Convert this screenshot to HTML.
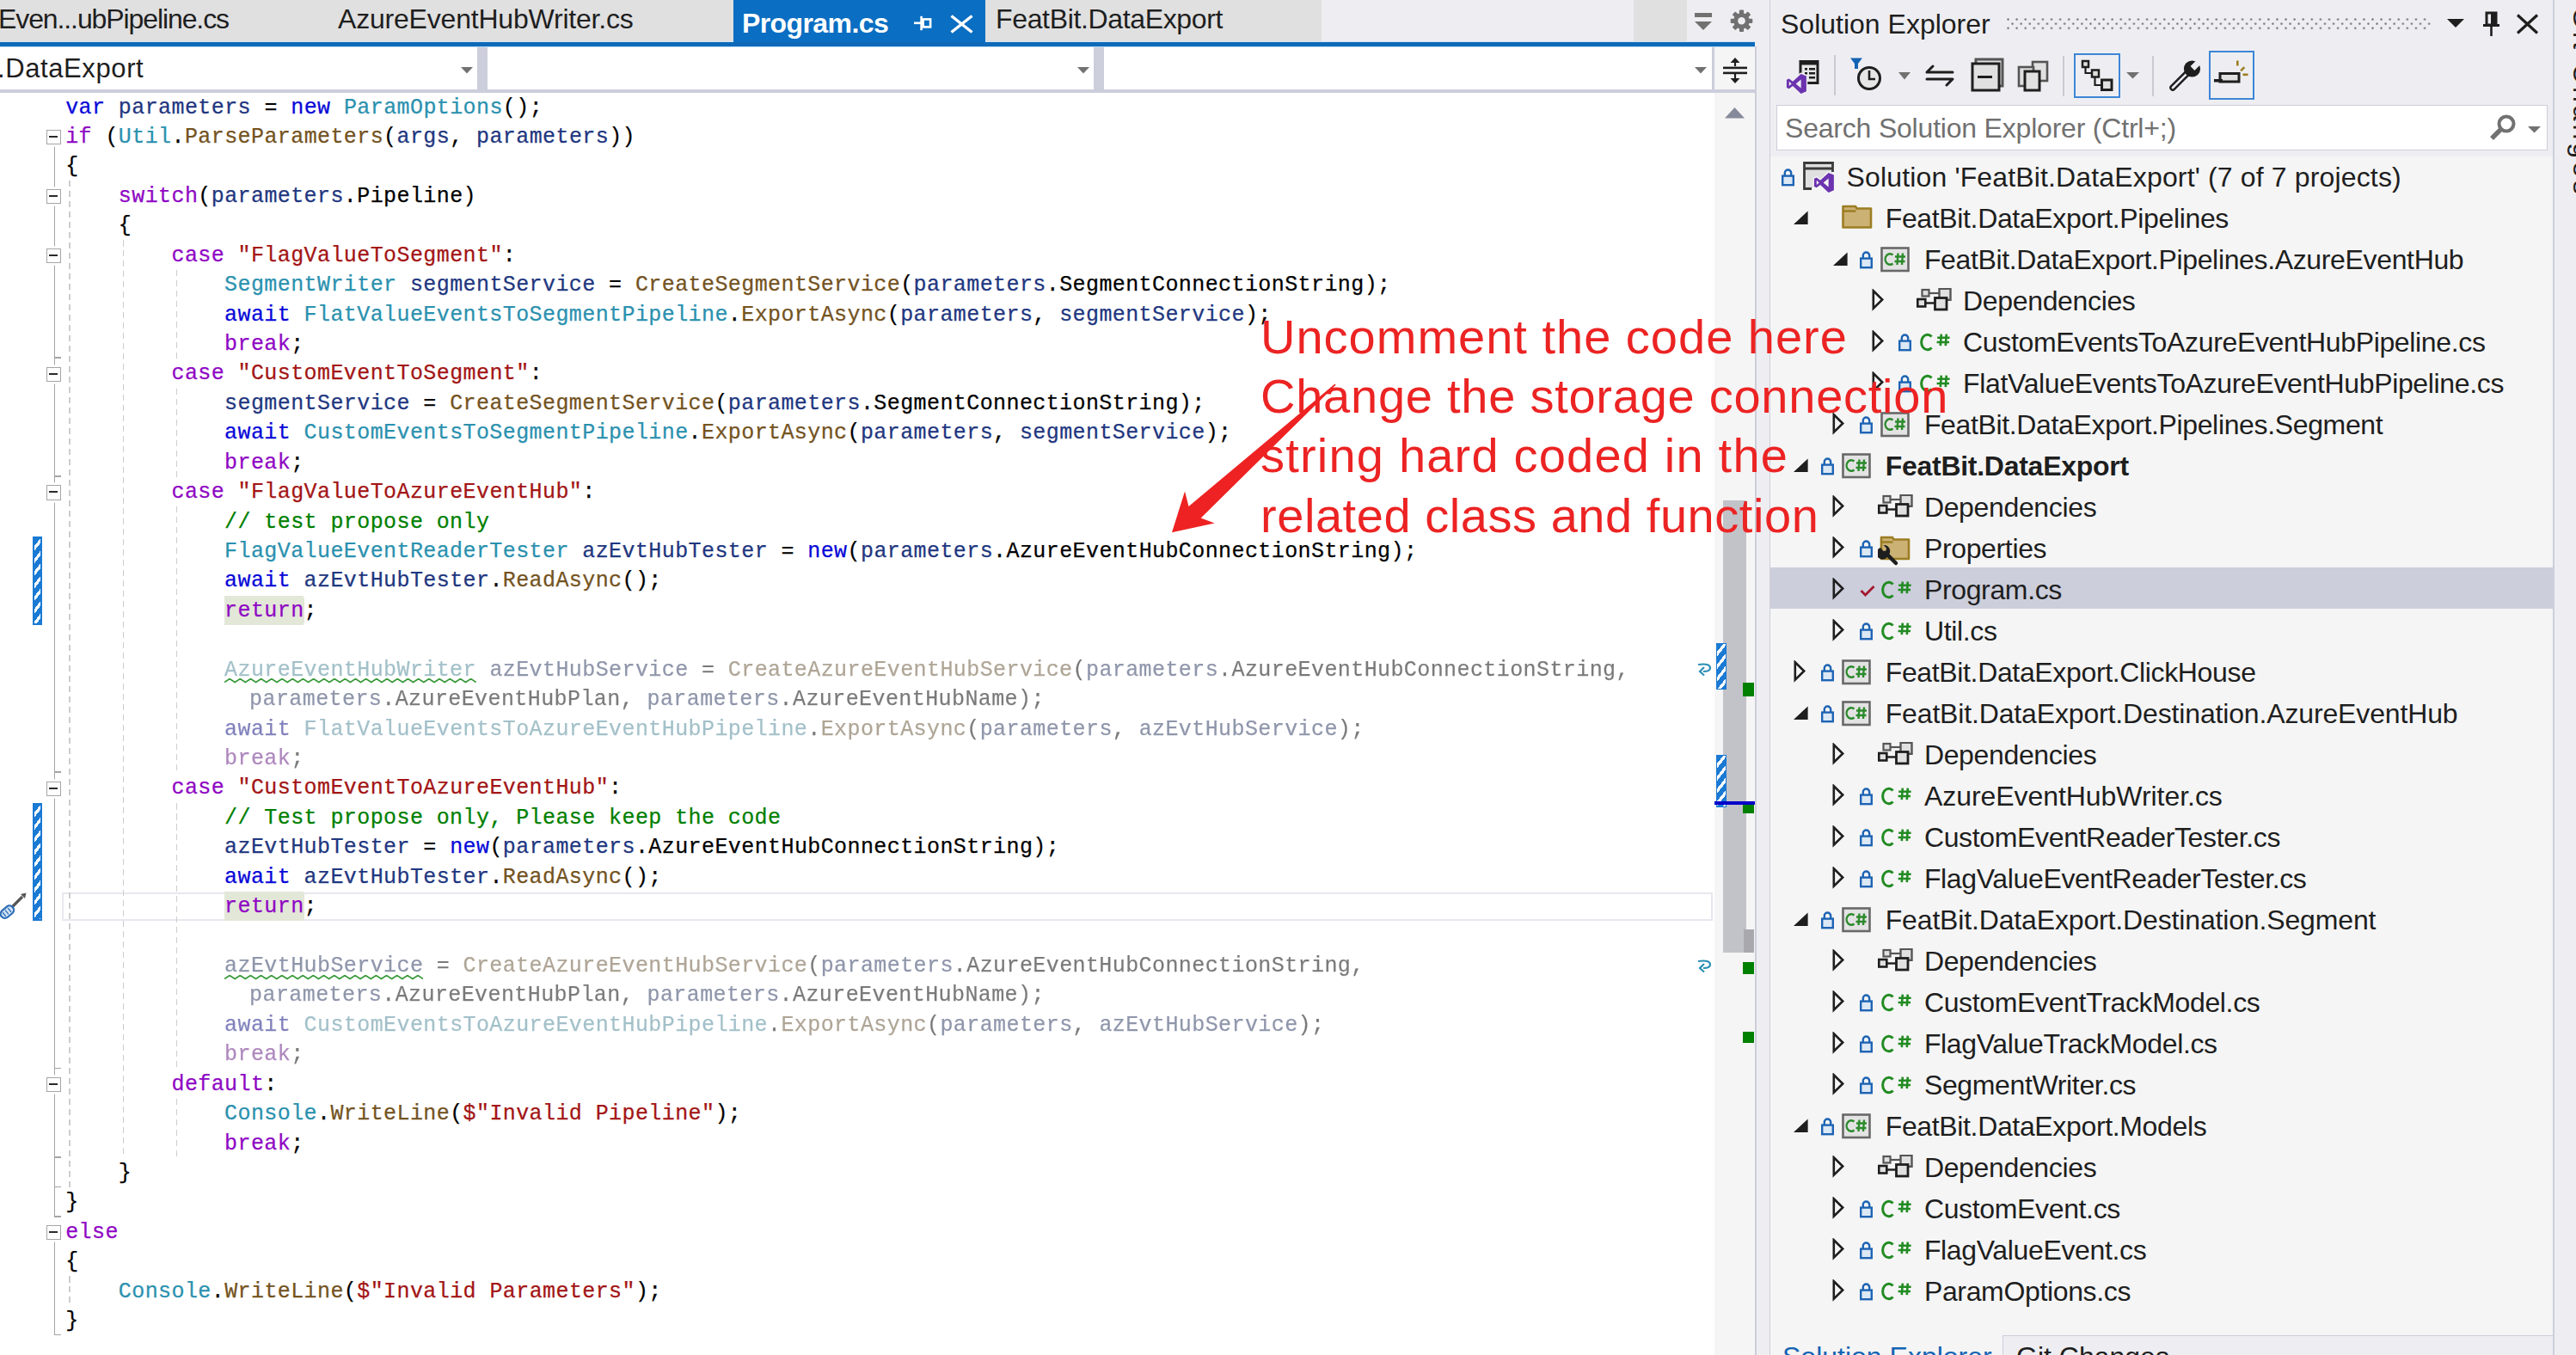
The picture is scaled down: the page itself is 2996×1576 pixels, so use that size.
<!DOCTYPE html>
<html><head><meta charset="utf-8"><style>
*{margin:0;padding:0;box-sizing:border-box}
html,body{width:2996px;height:1576px;overflow:hidden;background:#ffffff}
body{position:relative;font-family:"Liberation Sans",sans-serif;color:#1e1e1e}
.a{position:absolute}
.code{position:absolute;left:0;height:34.43px;line-height:34.43px;font-family:"Liberation Mono",monospace;font-size:25.000px;letter-spacing:0.410px;-webkit-text-stroke:0.25px currentColor;white-space:pre;color:#000}
.k{color:#0808d8}.c{color:#8f08c4}.t{color:#2b91af}.m{color:#74531f}.v{color:#1f377f}.p{color:#000}.s{color:#a31515}.g{color:#008000}
.fd{opacity:.52;filter:saturate(0.55)}
.hl{background:#e3e7d8}
.tr{position:absolute;height:48px;line-height:48px;font-size:32px;white-space:pre;color:#1e1e1e;letter-spacing:-0.35px}
.guide{position:absolute;width:1.6px;background:repeating-linear-gradient(to bottom,#cdcdcd 0,#cdcdcd 7.5px,transparent 7.5px,transparent 12px)}
.obox{position:absolute;width:17.2px;height:17.2px;border:1.6px solid #a5a5a5;background:#fff;box-shadow:0 0 0 2.6px #fff}
.obox:after{content:"";position:absolute;left:2.2px;top:6.1px;width:9.8px;height:1.9px;background:#2a2a2a}
.vl{position:absolute;width:1.6px;background:#a5a5a5}
.tick{position:absolute;height:1.6px;width:8px;background:#a5a5a5}
.cbar{position:absolute;left:38px;width:10.5px;border:2px solid #1a7ad4;background:repeating-linear-gradient(128deg,#1a7ad4 0,#1a7ad4 5.6px,#ffffff 5.6px,#ffffff 9px)}
.sbm{position:absolute;border:1.5px solid #1a7ad4;background:repeating-linear-gradient(128deg,#1a7ad4 0,#1a7ad4 5.6px,#ffffff 5.6px,#ffffff 9px)}
.grn{position:absolute;background:#008000}
.red{position:absolute;font-size:56px;letter-spacing:0.55px;color:#ec2323;white-space:pre;line-height:70px}
</style></head><body>

<div class="a" style="left:0;top:0;width:2041px;height:49px;background:#eeeef2"></div>
<div class="a" style="left:0;top:0;width:853px;height:49px;background:#e0e0e0"></div>
<div class="a" style="left:1146px;top:0;width:391px;height:49px;background:#e0e0e0"></div>
<div class="a" style="left:1900px;top:0;width:62px;height:49px;background:#e0e0e0"></div>
<div class="a" style="left:853px;top:0;width:293px;height:49px;background:#0a6ec2"></div>
<div class="a" style="left:-2px;top:0;height:49px;line-height:44px;font-size:32px;letter-spacing:-1.1px;white-space:pre;color:#1e1e1e">Even...ubPipeline.cs</div>
<div class="a" style="left:393px;top:0;height:49px;line-height:44px;font-size:32px;letter-spacing:-0.2px;white-space:pre;color:#1e1e1e">AzureEventHubWriter.cs</div>
<div class="a" style="left:863px;top:2.5px;height:49px;line-height:48px;font-size:32px;font-weight:bold;letter-spacing:-0.6px;white-space:pre;color:#ffffff">Program.cs</div>
<div class="a" style="left:1158px;top:0;height:49px;line-height:44px;font-size:32px;letter-spacing:-0.35px;white-space:pre;color:#1e1e1e">FeatBit.DataExport</div>
<svg class="a" style="left:1060px;top:14px" width="28" height="28" viewBox="0 0 28 28">
<rect x="13.6" y="8.4" width="8.5" height="9" fill="none" stroke="#fff" stroke-width="2.6"/>
<line x1="3" y1="12.8" x2="12" y2="12.8" stroke="#fff" stroke-width="2.6"/>
<line x1="11.6" y1="4.8" x2="11.6" y2="21.2" stroke="#fff" stroke-width="2.6"/>
</svg>
<svg class="a" style="left:1103px;top:14px" width="30" height="30" viewBox="0 0 30 30">
<path d="M3.5 4.5 L27.5 23.5 M27.5 4.5 L3.5 23.5" stroke="#fff" stroke-width="3.4"/>
</svg>
<svg class="a" style="left:1968px;top:12px" width="26" height="26" viewBox="0 0 26 26">
<rect x="3" y="3" width="20" height="5" fill="#717171"/>
<path d="M3 13 L23 13 L13 23 Z" fill="#717171"/>
</svg>
<svg class="a" style="left:2010px;top:9px" width="31" height="31" viewBox="0 0 31 31">
<g transform="translate(15.5 15.3)" fill="#717171">
<circle r="9.3"/><rect x="-2.6" y="-12.8" width="5.2" height="6" rx="1" transform="rotate(0)"/><rect x="-2.6" y="-12.8" width="5.2" height="6" rx="1" transform="rotate(45)"/><rect x="-2.6" y="-12.8" width="5.2" height="6" rx="1" transform="rotate(90)"/><rect x="-2.6" y="-12.8" width="5.2" height="6" rx="1" transform="rotate(135)"/><rect x="-2.6" y="-12.8" width="5.2" height="6" rx="1" transform="rotate(180)"/><rect x="-2.6" y="-12.8" width="5.2" height="6" rx="1" transform="rotate(225)"/><rect x="-2.6" y="-12.8" width="5.2" height="6" rx="1" transform="rotate(270)"/><rect x="-2.6" y="-12.8" width="5.2" height="6" rx="1" transform="rotate(315)"/>
<circle r="4.3" fill="#eeeef2"/>
</g></svg>
<div class="a" style="left:0;top:48px;width:853px;height:1px;background:#cfe6f7"></div>
<div class="a" style="left:1146px;top:48px;width:895px;height:1px;background:#cfe6f7"></div>
<div class="a" style="left:0;top:49px;width:2041px;height:5px;background:#0e6ab8"></div>
<div class="a" style="left:0;top:54px;width:2041px;height:1.5px;background:#bcdcf5"></div>
<div class="a" style="left:0;top:55px;width:1994px;height:53px;background:#cccedb"></div>
<div class="a" style="left:0;top:55px;width:555px;height:49px;background:#fff"></div>
<div class="a" style="left:567px;top:55px;width:705px;height:49px;background:#fff"></div>
<div class="a" style="left:1284px;top:55px;width:707px;height:49px;background:#fff"></div>
<div class="a" style="left:-3px;top:56px;height:48px;line-height:48px;font-size:31px;letter-spacing:0.6px;white-space:pre;color:#1e1e1e">.DataExport</div>
<svg class="a" style="left:535.7px;top:78px" width="14" height="8" viewBox="0 0 14 8"><path d="M0 0 L14 0 L7 7.5 Z" fill="#717171"/></svg>
<svg class="a" style="left:1252.5px;top:78px" width="14" height="8" viewBox="0 0 14 8"><path d="M0 0 L14 0 L7 7.5 Z" fill="#717171"/></svg>
<svg class="a" style="left:1970.5px;top:78px" width="14" height="8" viewBox="0 0 14 8"><path d="M0 0 L14 0 L7 7.5 Z" fill="#717171"/></svg>
<div class="a" style="left:1994px;top:55px;width:47px;height:53px;background:#f5f5f5"></div>
<div class="a" style="left:1994px;top:104px;width:47px;height:4px;background:#cccedb"></div>
<svg class="a" style="left:2003px;top:66px" width="30" height="32" viewBox="0 0 30 32">
<rect x="1" y="11.6" width="28" height="2.6" fill="#1e1e1e"/>
<rect x="1" y="17.6" width="28" height="2.6" fill="#1e1e1e"/>
<line x1="15" y1="5" x2="15" y2="11" stroke="#1e1e1e" stroke-width="2.2"/>
<path d="M9.5 7 L15 1 L20.5 7 Z" fill="#1e1e1e"/>
<line x1="15" y1="20" x2="15" y2="26" stroke="#1e1e1e" stroke-width="2.2"/>
<path d="M9.5 25 L15 31 L20.5 25 Z" fill="#1e1e1e"/>
</svg>
<div class="a" style="left:71.8px;top:1037.6px;width:1920px;height:33px;border:2.5px solid #e7e7ef"></div>
<div class="a" style="left:260.5px;top:692.51px;width:92.5px;height:34.43px;background:#e3e7d8"></div>
<div class="a" style="left:260.5px;top:1036.81px;width:92.5px;height:34.43px;background:#e3e7d8"></div>
<div class="guide" style="left:80.3px;top:210.49px;height:1170.62px"></div>
<div class="guide" style="left:80.3px;top:1484.40px;height:34.43px"></div>
<div class="guide" style="left:142.8px;top:279.35px;height:1067.33px"></div>
<div class="guide" style="left:204.6px;top:313.78px;height:103.29px"></div>
<div class="guide" style="left:204.6px;top:451.50px;height:103.29px"></div>
<div class="guide" style="left:204.6px;top:589.22px;height:309.87px"></div>
<div class="guide" style="left:204.6px;top:933.52px;height:309.87px"></div>
<div class="guide" style="left:204.6px;top:1277.82px;height:68.86px"></div>
<div class="vl" style="left:62.9px;top:167.44px;height:1248.10px"></div>
<div class="vl" style="left:62.9px;top:1441.35px;height:111.91px"></div>
<div class="tick" style="left:62.9px;top:415.47px"></div>
<div class="tick" style="left:62.9px;top:553.19px"></div>
<div class="tick" style="left:62.9px;top:897.49px"></div>
<div class="tick" style="left:62.9px;top:1241.79px"></div>
<div class="tick" style="left:62.9px;top:1345.08px"></div>
<div class="tick" style="left:62.9px;top:1379.51px"></div>
<div class="tick" style="left:62.9px;top:1413.94px"></div>
<div class="tick" style="left:62.9px;top:1551.66px"></div>
<div class="obox" style="left:54.3px;top:151.25px"></div>
<div class="obox" style="left:54.3px;top:220.11px"></div>
<div class="obox" style="left:54.3px;top:288.96px"></div>
<div class="obox" style="left:54.3px;top:426.68px"></div>
<div class="obox" style="left:54.3px;top:564.40px"></div>
<div class="obox" style="left:54.3px;top:908.71px"></div>
<div class="obox" style="left:54.3px;top:1253.01px"></div>
<div class="obox" style="left:54.3px;top:1425.15px"></div>
<div class="cbar" style="top:623.7px;height:103.3px"></div>
<div class="cbar" style="top:933.5px;height:137.7px"></div>
<div class="code" style="left:76.20px;top:108.50px"><span class="k">var</span><span class="p"> </span><span class="v">parameters</span><span class="p"> = </span><span class="k">new</span><span class="p"> </span><span class="t">ParamOptions</span><span class="p">();</span></div>
<div class="code" style="left:76.20px;top:142.93px"><span class="c">if</span><span class="p"> (</span><span class="t">Util</span><span class="p">.</span><span class="m">ParseParameters</span><span class="p">(</span><span class="v">args</span><span class="p">, </span><span class="v">parameters</span><span class="p">))</span></div>
<div class="code" style="left:76.20px;top:177.36px"><span class="p">{</span></div>
<div class="code" style="left:137.84px;top:211.79px"><span class="c">switch</span><span class="p">(</span><span class="v">parameters</span><span class="p">.Pipeline)</span></div>
<div class="code" style="left:137.84px;top:246.22px"><span class="p">{</span></div>
<div class="code" style="left:199.48px;top:280.65px"><span class="c">case</span><span class="p"> </span><span class="s">"FlagValueToSegment"</span><span class="p">:</span></div>
<div class="code" style="left:261.12px;top:315.08px"><span class="t">SegmentWriter</span><span class="p"> </span><span class="v">segmentService</span><span class="p"> = </span><span class="m">CreateSegmentService</span><span class="p">(</span><span class="v">parameters</span><span class="p">.SegmentConnectionString);</span></div>
<div class="code" style="left:261.12px;top:349.51px"><span class="k">await</span><span class="p"> </span><span class="t">FlatValueEventsToSegmentPipeline</span><span class="p">.</span><span class="m">ExportAsync</span><span class="p">(</span><span class="v">parameters</span><span class="p">, </span><span class="v">segmentService</span><span class="p">);</span></div>
<div class="code" style="left:261.12px;top:383.94px"><span class="c">break</span><span class="p">;</span></div>
<div class="code" style="left:199.48px;top:418.37px"><span class="c">case</span><span class="p"> </span><span class="s">"CustomEventToSegment"</span><span class="p">:</span></div>
<div class="code" style="left:261.12px;top:452.80px"><span class="v">segmentService</span><span class="p"> = </span><span class="m">CreateSegmentService</span><span class="p">(</span><span class="v">parameters</span><span class="p">.SegmentConnectionString);</span></div>
<div class="code" style="left:261.12px;top:487.23px"><span class="k">await</span><span class="p"> </span><span class="t">CustomEventsToSegmentPipeline</span><span class="p">.</span><span class="m">ExportAsync</span><span class="p">(</span><span class="v">parameters</span><span class="p">, </span><span class="v">segmentService</span><span class="p">);</span></div>
<div class="code" style="left:261.12px;top:521.66px"><span class="c">break</span><span class="p">;</span></div>
<div class="code" style="left:199.48px;top:556.09px"><span class="c">case</span><span class="p"> </span><span class="s">"FlagValueToAzureEventHub"</span><span class="p">:</span></div>
<div class="code" style="left:261.12px;top:590.52px"><span class="g">// test propose only</span></div>
<div class="code" style="left:261.12px;top:624.95px"><span class="t">FlagValueEventReaderTester</span><span class="p"> </span><span class="v">azEvtHubTester</span><span class="p"> = </span><span class="k">new</span><span class="p">(</span><span class="v">parameters</span><span class="p">.AzureEventHubConnectionString);</span></div>
<div class="code" style="left:261.12px;top:659.38px"><span class="k">await</span><span class="p"> </span><span class="v">azEvtHubTester</span><span class="p">.</span><span class="m">ReadAsync</span><span class="p">();</span></div>
<div class="code" style="left:261.12px;top:693.81px"><span class="c hl">return</span><span class="p">;</span></div>
<div class="code fd" style="left:261.12px;top:762.67px"><span class="t sq">AzureEventHubWriter</span><span class="p"> </span><span class="v">azEvtHubService</span><span class="p"> = </span><span class="m">CreateAzureEventHubService</span><span class="p">(</span><span class="v">parameters</span><span class="p">.AzureEventHubConnectionString,</span></div>
<div class="code fd" style="left:290.12px;top:797.10px"><span class="v">parameters</span><span class="p">.AzureEventHubPlan, </span><span class="v">parameters</span><span class="p">.AzureEventHubName);</span></div>
<div class="code fd" style="left:261.12px;top:831.53px"><span class="k">await</span><span class="p"> </span><span class="t">FlatValueEventsToAzureEventHubPipeline</span><span class="p">.</span><span class="m">ExportAsync</span><span class="p">(</span><span class="v">parameters</span><span class="p">, </span><span class="v">azEvtHubService</span><span class="p">);</span></div>
<div class="code fd" style="left:261.12px;top:865.96px"><span class="c">break</span><span class="p">;</span></div>
<div class="code" style="left:199.48px;top:900.39px"><span class="c">case</span><span class="p"> </span><span class="s">"CustomEventToAzureEventHub"</span><span class="p">:</span></div>
<div class="code" style="left:261.12px;top:934.82px"><span class="g">// Test propose only, Please keep the code</span></div>
<div class="code" style="left:261.12px;top:969.25px"><span class="v">azEvtHubTester</span><span class="p"> = </span><span class="k">new</span><span class="p">(</span><span class="v">parameters</span><span class="p">.AzureEventHubConnectionString);</span></div>
<div class="code" style="left:261.12px;top:1003.68px"><span class="k">await</span><span class="p"> </span><span class="v">azEvtHubTester</span><span class="p">.</span><span class="m">ReadAsync</span><span class="p">();</span></div>
<div class="code" style="left:261.12px;top:1038.11px"><span class="c hl">return</span><span class="p">;</span></div>
<div class="code fd" style="left:261.12px;top:1106.97px"><span class="v sq">azEvtHubService</span><span class="p"> = </span><span class="m">CreateAzureEventHubService</span><span class="p">(</span><span class="v">parameters</span><span class="p">.AzureEventHubConnectionString,</span></div>
<div class="code fd" style="left:290.12px;top:1141.40px"><span class="v">parameters</span><span class="p">.AzureEventHubPlan, </span><span class="v">parameters</span><span class="p">.AzureEventHubName);</span></div>
<div class="code fd" style="left:261.12px;top:1175.83px"><span class="k">await</span><span class="p"> </span><span class="t">CustomEventsToAzureEventHubPipeline</span><span class="p">.</span><span class="m">ExportAsync</span><span class="p">(</span><span class="v">parameters</span><span class="p">, </span><span class="v">azEvtHubService</span><span class="p">);</span></div>
<div class="code fd" style="left:261.12px;top:1210.26px"><span class="c">break</span><span class="p">;</span></div>
<div class="code" style="left:199.48px;top:1244.69px"><span class="c">default</span><span class="p">:</span></div>
<div class="code" style="left:261.12px;top:1279.12px"><span class="t">Console</span><span class="p">.</span><span class="m">WriteLine</span><span class="p">(</span><span class="s">$"Invalid Pipeline"</span><span class="p">);</span></div>
<div class="code" style="left:261.12px;top:1313.55px"><span class="c">break</span><span class="p">;</span></div>
<div class="code" style="left:137.84px;top:1347.98px"><span class="p">}</span></div>
<div class="code" style="left:76.20px;top:1382.41px"><span class="p">}</span></div>
<div class="code" style="left:76.20px;top:1416.84px"><span class="c">else</span></div>
<div class="code" style="left:76.20px;top:1451.27px"><span class="p">{</span></div>
<div class="code" style="left:137.84px;top:1485.70px"><span class="t">Console</span><span class="p">.</span><span class="m">WriteLine</span><span class="p">(</span><span class="s">$"Invalid Parameters"</span><span class="p">);</span></div>
<div class="code" style="left:76.20px;top:1520.13px"><span class="p">}</span></div>
<svg class="a" style="left:261.1px;top:789.4px" width="292.8" height="6" viewBox="0 0 292.8 6"><path d="M0 4.6 L6.10 0.6 L12.20 4.6 L18.30 0.6 L24.40 4.6 L30.50 0.6 L36.60 4.6 L42.70 0.6 L48.80 4.6 L54.90 0.6 L61.00 4.6 L67.10 0.6 L73.20 4.6 L79.30 0.6 L85.40 4.6 L91.50 0.6 L97.60 4.6 L103.70 0.6 L109.80 4.6 L115.90 0.6 L122.00 4.6 L128.10 0.6 L134.20 4.6 L140.30 0.6 L146.40 4.6 L152.49 0.6 L158.59 4.6 L164.69 0.6 L170.79 4.6 L176.89 0.6 L182.99 4.6 L189.09 0.6 L195.19 4.6 L201.29 0.6 L207.39 4.6 L213.49 0.6 L219.59 4.6 L225.69 0.6 L231.79 4.6 L237.89 0.6 L243.99 4.6 L250.09 0.6 L256.19 4.6 L262.29 0.6 L268.39 4.6 L274.49 0.6 L280.59 4.6 L286.69 0.6 L292.79 4.6" fill="none" stroke="#3a9a3a" stroke-width="1.8" stroke-linejoin="round"/></svg>
<svg class="a" style="left:261.1px;top:1133.7px" width="231.2" height="6" viewBox="0 0 231.2 6"><path d="M0 4.6 L6.08 0.6 L12.17 4.6 L18.25 0.6 L24.33 4.6 L30.41 0.6 L36.50 4.6 L42.58 0.6 L48.66 4.6 L54.75 0.6 L60.83 4.6 L66.91 0.6 L72.99 4.6 L79.08 0.6 L85.16 4.6 L91.24 0.6 L97.33 4.6 L103.41 0.6 L109.49 4.6 L115.58 0.6 L121.66 4.6 L127.74 0.6 L133.82 4.6 L139.91 0.6 L145.99 4.6 L152.07 0.6 L158.16 4.6 L164.24 0.6 L170.32 4.6 L176.40 0.6 L182.49 4.6 L188.57 0.6 L194.65 4.6 L200.74 0.6 L206.82 4.6 L212.90 0.6 L218.98 4.6 L225.07 0.6 L231.15 4.6" fill="none" stroke="#3a9a3a" stroke-width="1.8" stroke-linejoin="round"/></svg>
<svg class="a" style="left:1971px;top:769.4px" width="22" height="18" viewBox="0 0 22 18">
<path d="M4 4 Q18 2 18 8 Q18 12 10 12" fill="none" stroke="#2b8fb5" stroke-width="2.2"/>
<path d="M11 7 L6 12 L11 16.5" fill="none" stroke="#2b8fb5" stroke-width="2.2"/>
</svg>
<svg class="a" style="left:1971px;top:1113.7px" width="22" height="18" viewBox="0 0 22 18">
<path d="M4 4 Q18 2 18 8 Q18 12 10 12" fill="none" stroke="#2b8fb5" stroke-width="2.2"/>
<path d="M11 7 L6 12 L11 16.5" fill="none" stroke="#2b8fb5" stroke-width="2.2"/>
</svg>
<svg class="a" style="left:0px;top:1037.3px" width="32" height="34" viewBox="0 0 32 34">
<path d="M13 19 L26 6" stroke="#555" stroke-width="3.2"/>
<path d="M24 3 L30.5 1.5 L29 8 Z" fill="#555"/>
<g transform="rotate(-40 8 24)"><rect x="0" y="19" width="17" height="10" rx="5" fill="#cfe3f5" stroke="#2d6cb5" stroke-width="2.2"/>
<path d="M4 21 L4 27 M8 21 L8 27 M12 21 L12 27" stroke="#2d6cb5" stroke-width="1.3"/></g>
</svg>
<div class="a" style="left:1994px;top:108px;width:47px;height:1468px;background:#f5f5f5"></div>
<div class="a" style="left:2041px;top:54px;width:2px;height:1522px;background:#cccedb"></div>
<svg class="a" style="left:2006px;top:124.6px" width="23" height="13" viewBox="0 0 23 13"><path d="M0 12.5 L11.5 0 L23 12.5 Z" fill="#868999"/></svg>
<div class="a" style="left:2004.3px;top:582px;width:26.5px;height:526px;background:#c2c3c9"></div>
<div class="a" style="left:2028px;top:1081px;width:11.6px;height:27px;background:#a9a9ad"></div>
<div class="sbm" style="left:1996px;top:748px;width:12px;height:54px"></div>
<div class="sbm" style="left:1996px;top:878px;width:12px;height:61px"></div>
<div class="a" style="left:1994px;top:931.5px;width:47px;height:4px;background:#0000c8"></div>
<div class="grn" style="left:2026.7px;top:793.5px;width:13.6px;height:16.5px"></div>
<div class="grn" style="left:2026.7px;top:935.5px;width:13.6px;height:10.5px"></div>
<div class="grn" style="left:2026.7px;top:1118.6px;width:13.6px;height:14.4px"></div>
<div class="grn" style="left:2026.7px;top:1199.5px;width:13.6px;height:13.5px"></div>
<div class="a" style="left:2043px;top:0;width:16px;height:1576px;background:#eeeef2"></div>
<div class="a" style="left:2041px;top:0;width:2px;height:54px;background:#eeeef2"></div>
<div class="a" style="left:2057.8px;top:0;width:1.6px;height:1576px;background:#cccedb"></div>
<div class="a" style="left:2059.4px;top:0;width:911px;height:1576px;background:#eeeef2"></div>
<div class="a" style="left:2071px;top:1px;height:54px;line-height:54px;font-size:32px;letter-spacing:0px;white-space:pre;color:#1e1e1e">Solution Explorer</div>
<div class="a" style="left:2331.5px;top:19.3px;width:496px;height:15.3px;background-image:radial-gradient(circle,#7e7e7e 0.9px,transparent 1.5px),radial-gradient(circle,#7e7e7e 0.9px,transparent 1.5px);background-size:10.1px 10.2px;background-position:-1.5px -1.5px,3.55px 3.6px"></div>
<svg class="a" style="left:2846px;top:22px" width="20" height="10" viewBox="0 0 20 10"><path d="M0 0 L20 0 L10 10 Z" fill="#1e1e1e"/></svg>
<svg class="a" style="left:2886px;top:13px" width="24" height="30" viewBox="0 0 24 30">
<rect x="6" y="2" width="11" height="14" fill="none" stroke="#1e1e1e" stroke-width="3"/>
<rect x="11" y="2" width="6" height="14" fill="#1e1e1e"/>
<rect x="2" y="15" width="19" height="3" fill="#1e1e1e"/>
<rect x="10.2" y="17" width="2.6" height="12" fill="#1e1e1e"/>
</svg>
<svg class="a" style="left:2926px;top:16px" width="28" height="24" viewBox="0 0 28 24">
<path d="M2 1.5 L25 22.5 M25 1.5 L2 22.5" stroke="#1e1e1e" stroke-width="3.2"/>
</svg>
<svg class="a" style="left:2076px;top:68px" width="42" height="42" viewBox="0 0 42 42">
<rect x="18" y="3.5" width="20" height="25" fill="#e6e6e6" stroke="#1e1e1e" stroke-width="3"/>
<rect x="18" y="3.5" width="20" height="4" fill="#1e1e1e"/>
<rect x="23" y="11" width="3" height="2.5" fill="#1e1e1e"/><rect x="28" y="11" width="7" height="2.5" fill="#1e1e1e"/>
<rect x="23" y="16" width="3" height="2.5" fill="#1e1e1e"/><rect x="28" y="16" width="7" height="2.5" fill="#1e1e1e"/>
<rect x="23" y="21" width="3" height="2.5" fill="#1e1e1e"/><rect x="28" y="21" width="7" height="2.5" fill="#1e1e1e"/>
</svg>
<svg class="a" style="left:2075.9px;top:83.7px" width="26.8" height="26.8" viewBox="-2 -2 28 28"><path d="M17.5 0 L24 2.7 L24 21.3 L17.5 24 L7.5 14.8 L3 18.2 L0 16.8 L0 7.2 L3 5.8 L7.5 9.2 Z M17.5 6.8 L17.5 17.2 L11.2 12 Z M3 9.2 L3 14.8 L6 12 Z" fill="#eeeef2" stroke="#eeeef2" stroke-width="3" stroke-linejoin="round"/><path d="M17.5 0 L24 2.7 L24 21.3 L17.5 24 L7.5 14.8 L3 18.2 L0 16.8 L0 7.2 L3 5.8 L7.5 9.2 Z M17.5 6.8 L17.5 17.2 L11.2 12 Z M3 9.2 L3 14.8 L6 12 Z" fill="#6c33af" fill-rule="evenodd"/></svg>
<div class="a" style="left:2133px;top:64px;width:2px;height:47px;background:#c9cad3"></div>
<svg class="a" style="left:2150px;top:66px" width="40" height="40" viewBox="0 0 40 40">
<path d="M2 1.5 L16 1.5 L11 8 L11 14 L7 14 L7 8 Z" fill="#1464b4"/>
<circle cx="24" cy="25" r="12.5" fill="#e6e6e6" stroke="#1e1e1e" stroke-width="3"/>
<path d="M24 16 L24 26 L31 26" fill="none" stroke="#1e1e1e" stroke-width="2.6"/>
</svg>
<svg class="a" style="left:2207.8px;top:83.7px" width="14" height="9" viewBox="0 0 14 9"><path d="M0 0 L14 0 L7 8.5 Z" fill="#717171"/></svg>
<svg class="a" style="left:2238px;top:74px" width="36" height="28" viewBox="0 0 36 28">
<path d="M3 10 L33 10 M3 10 L10 3" fill="none" stroke="#1e1e1e" stroke-width="3" stroke-linecap="round"/>
<path d="M3 18 L33 18 M33 18 L26 25" fill="none" stroke="#1e1e1e" stroke-width="3" stroke-linecap="round"/>
</svg>
<svg class="a" style="left:2291px;top:66px" width="42" height="42" viewBox="0 0 42 42">
<rect x="7" y="3" width="31" height="31" fill="#e0e0e0" stroke="#555" stroke-width="3"/>
<rect x="3" y="8" width="31" height="31" fill="#e0e0e0" stroke="#1e1e1e" stroke-width="3"/>
<rect x="9" y="22" width="17" height="3" fill="#1e1e1e"/>
</svg>
<svg class="a" style="left:2344px;top:68px" width="40" height="40" viewBox="0 0 40 40">
<rect x="20" y="4" width="17" height="22" fill="#e0e0e0" stroke="#555" stroke-width="2.6"/>
<rect x="4" y="10" width="17" height="22" fill="#e0e0e0" stroke="#555" stroke-width="2.6"/>
<rect x="11" y="15" width="17" height="22" fill="#e0e0e0" stroke="#1e1e1e" stroke-width="3"/>
</svg>
<div class="a" style="left:2399px;top:64.6px;width:2px;height:47px;background:#c9cad3"></div>
<div class="a" style="left:2412.3px;top:61.6px;width:53.4px;height:52.4px;border:2.5px solid #3d86d6"></div>
<svg class="a" style="left:2418px;top:68px" width="42" height="42" viewBox="0 0 42 42">
<path d="M7.5 8 L7.5 17 L18 17 M18.5 20 L18.5 31 L28 31" fill="none" stroke="#1e1e1e" stroke-width="2.2"/>
<rect x="4" y="3" width="7" height="7" fill="#e0e0e0" stroke="#1e1e1e" stroke-width="2.5"/>
<rect x="15" y="13.5" width="8" height="8" fill="#e0e0e0" stroke="#1e1e1e" stroke-width="2.5"/>
<rect x="26.5" y="25" width="11.5" height="11.5" fill="#e0e0e0" stroke="#1e1e1e" stroke-width="3"/>
</svg>
<svg class="a" style="left:2472.5px;top:84px" width="15" height="8" viewBox="0 0 15 8"><path d="M0 0 L15 0 L7.5 7.5 Z" fill="#717171"/></svg>
<div class="a" style="left:2503px;top:64.6px;width:2px;height:47px;background:#c9cad3"></div>
<svg class="a" style="left:2521px;top:68px" width="40" height="40" viewBox="0 0 40 40">
<path d="M6 34 L23 17" stroke="#1e1e1e" stroke-width="7.5" stroke-linecap="round"/>
<path d="M6 34 L23 17" stroke="#eeeef2" stroke-width="2.6" stroke-linecap="round"/>
<circle cx="28.5" cy="12" r="9.6" fill="#1e1e1e"/>
<path d="M26.6 9.1 L31.4 13.9 L42 3.3 L37.2 -1.5 Z" fill="#eeeef2"/>
</svg>
<div class="a" style="left:2568.6px;top:59.2px;width:53px;height:57.3px;border:2.5px solid #3d86d6"></div>
<svg class="a" style="left:2574px;top:68px" width="44" height="40" viewBox="0 0 44 40">
<rect x="8" y="17.5" width="22" height="9.5" fill="#e0e0e0" stroke="#1e1e1e" stroke-width="3"/>
<rect x="1" y="24" width="10" height="3.5" fill="#1e1e1e"/>
<rect x="27" y="2.5" width="2.6" height="6" fill="#9c7d22"/>
<rect x="33" y="9" width="2.6" height="6" fill="#9c7d22" transform="rotate(45 34 12)"/>
<rect x="34.5" y="17.5" width="6" height="2.6" fill="#9c7d22"/>
</svg>
<div class="a" style="left:2066px;top:122px;width:897px;height:53.2px;background:#fff;border:1.6px solid #cccedb"></div>
<div class="a" style="left:2076px;top:123px;height:52px;line-height:52px;font-size:32px;letter-spacing:-0.2px;white-space:pre;color:#717171">Search Solution Explorer (Ctrl+;)</div>
<svg class="a" style="left:2893px;top:132px" width="36" height="34" viewBox="0 0 36 34">
<circle cx="22" cy="12" r="8.5" fill="none" stroke="#717171" stroke-width="4"/>
<path d="M16 18 L5 29" stroke="#717171" stroke-width="5.5"/>
</svg>
<svg class="a" style="left:2940px;top:146.6px" width="15" height="8" viewBox="0 0 15 8"><path d="M0 0 L15 0 L7.5 7.5 Z" fill="#717171"/></svg>
<div class="a" style="left:2059.4px;top:182.3px;width:911px;height:1400px;background:#f5f5f5"></div>
<div class="a" style="left:2059.4px;top:660.3px;width:910px;height:48px;background:#cccedb"></div>
<svg class="a" style="left:2072.4px;top:196.0px" width="15" height="21" viewBox="0 0 15 21"><path d="M3.8 9 L3.8 5.2 A3.7 3.7 0 0 1 11.2 5.2 L11.2 9" fill="none" stroke="#1e64b4" stroke-width="2.4"/><rect x="1.2" y="8.6" width="12.6" height="10.6" fill="#dbe8f5" stroke="#1e64b4" stroke-width="2.4"/></svg>
<svg class="a" style="left:2097.0px;top:187.8px" width="38" height="38" viewBox="0 0 38 38"><path d="M10 31.5 L1.5 31.5 L1.5 1.5 L34.5 1.5 L34.5 12" fill="#e0e0e0" stroke="#3c3c3c" stroke-width="2.8"/><path d="M1.5 8 L34.5 8" stroke="#3c3c3c" stroke-width="3"/></svg><svg class="a" style="left:2107.7px;top:199.4px" width="26.8" height="26.8" viewBox="-2 -2 28 28"><path d="M17.5 0 L24 2.7 L24 21.3 L17.5 24 L7.5 14.8 L3 18.2 L0 16.8 L0 7.2 L3 5.8 L7.5 9.2 Z M17.5 6.8 L17.5 17.2 L11.2 12 Z M3 9.2 L3 14.8 L6 12 Z" fill="#f5f5f5" stroke="#f5f5f5" stroke-width="3" stroke-linejoin="round"/><path d="M17.5 0 L24 2.7 L24 21.3 L17.5 24 L7.5 14.8 L3 18.2 L0 16.8 L0 7.2 L3 5.8 L7.5 9.2 Z M17.5 6.8 L17.5 17.2 L11.2 12 Z M3 9.2 L3 14.8 L6 12 Z" fill="#6c33af" fill-rule="evenodd"/></svg>
<div class="tr" style="left:2147.5px;top:182.3px;letter-spacing:0.15px;">Solution 'FeatBit.DataExport' (7 of 7 projects)</div>
<svg class="a" style="left:2086.3px;top:244.6px" width="18" height="17" viewBox="0 0 18 17"><path d="M0 16 L16.6 16 L16.6 0.5 Z" fill="#1e1e1e"/></svg>
<svg class="a" style="left:2142.0px;top:238.4px" width="36" height="28" viewBox="0 0 36 28"><path d="M1.5 26.5 L1.5 2 L16 2 L17.5 4.5 L34 4.5 L34 26.5 Z" fill="#cbb174" stroke="#9c7d22" stroke-width="2.6" stroke-linejoin="round"/><path d="M2 7.5 L16.5 7.5" stroke="#9c7d22" stroke-width="2.4"/></svg>
<div class="tr" style="left:2192.7px;top:230.3px;letter-spacing:-0.35px;">FeatBit.DataExport.Pipelines</div>
<svg class="a" style="left:2131.5px;top:292.6px" width="18" height="17" viewBox="0 0 18 17"><path d="M0 16 L16.6 16 L16.6 0.5 Z" fill="#1e1e1e"/></svg>
<svg class="a" style="left:2162.8px;top:292.0px" width="15" height="21" viewBox="0 0 15 21"><path d="M3.8 9 L3.8 5.2 A3.7 3.7 0 0 1 11.2 5.2 L11.2 9" fill="none" stroke="#1e64b4" stroke-width="2.4"/><rect x="1.2" y="8.6" width="12.6" height="10.6" fill="#dbe8f5" stroke="#1e64b4" stroke-width="2.4"/></svg>
<svg class="a" style="left:2187.3px;top:286.5px" width="35" height="30" viewBox="0 0 35 30"><rect x="1.5" y="1.5" width="31" height="26.5" fill="#e3e3e3" stroke="#686868" stroke-width="2.6"/><path d="M14.5 9.5 A5.5 6.3 0 1 0 14.5 19.5" fill="none" stroke="#2b8a2b" stroke-width="2.4"/><path d="M20.5 7.5 L19.5 21 M26 7.5 L25 21 M17 11.5 L29 11.5 M16.5 17 L28.5 17" stroke="#2b8a2b" stroke-width="2.4"/></svg>
<div class="tr" style="left:2237.9px;top:278.3px;letter-spacing:-0.35px;">FeatBit.DataExport.Pipelines.AzureEventHub</div>
<svg class="a" style="left:2176.5px;top:335.5px" width="15" height="26" viewBox="0 0 15 26"><path d="M1.8 2.3 L12.2 12.5 L1.8 22.7 Z" fill="none" stroke="#1e1e1e" stroke-width="2.6"/></svg>
<svg class="a" style="left:2229.0px;top:334.8px" width="42" height="28" viewBox="0 0 42 28"><path d="M14 6 L26 6" stroke="#555" stroke-width="2.2"/><rect x="6.5" y="2" width="8" height="7.5" fill="#e0e0e0" stroke="#555" stroke-width="2.2"/><rect x="26.5" y="0.8" width="13" height="13" fill="#e0e0e0" stroke="#555" stroke-width="2.4"/><path d="M9 17.5 L21 17.5" stroke="#1e1e1e" stroke-width="2.4"/><rect x="1.3" y="13" width="9" height="8.5" fill="#e0e0e0" stroke="#1e1e1e" stroke-width="2.6"/><rect x="21.5" y="11.5" width="13.5" height="13.5" fill="#e0e0e0" stroke="#1e1e1e" stroke-width="2.8"/></svg>
<div class="tr" style="left:2283.1px;top:326.3px;letter-spacing:-0.35px;">Dependencies</div>
<svg class="a" style="left:2176.5px;top:383.5px" width="15" height="26" viewBox="0 0 15 26"><path d="M1.8 2.3 L12.2 12.5 L1.8 22.7 Z" fill="none" stroke="#1e1e1e" stroke-width="2.6"/></svg>
<svg class="a" style="left:2208.0px;top:388.0px" width="15" height="21" viewBox="0 0 15 21"><path d="M3.8 9 L3.8 5.2 A3.7 3.7 0 0 1 11.2 5.2 L11.2 9" fill="none" stroke="#1e64b4" stroke-width="2.4"/><rect x="1.2" y="8.6" width="12.6" height="10.6" fill="#dbe8f5" stroke="#1e64b4" stroke-width="2.4"/></svg>
<svg class="a" style="left:2232.0px;top:386.8px" width="36" height="22" viewBox="0 0 36 22"><path d="M14.6 4.4 A7.2 8.8 0 1 0 14.6 17.6" fill="none" stroke="#228b22" stroke-width="3"/><path d="M25.8 1.6 L24.8 15.2 M31.8 1.6 L30.8 15.2 M21.2 5.8 L35.6 5.8 M20.6 11 L35 11" stroke="#228b22" stroke-width="2.6"/></svg>
<div class="tr" style="left:2283.1px;top:374.3px;letter-spacing:-0.35px;">CustomEventsToAzureEventHubPipeline.cs</div>
<svg class="a" style="left:2176.5px;top:431.5px" width="15" height="26" viewBox="0 0 15 26"><path d="M1.8 2.3 L12.2 12.5 L1.8 22.7 Z" fill="none" stroke="#1e1e1e" stroke-width="2.6"/></svg>
<svg class="a" style="left:2208.0px;top:436.0px" width="15" height="21" viewBox="0 0 15 21"><path d="M3.8 9 L3.8 5.2 A3.7 3.7 0 0 1 11.2 5.2 L11.2 9" fill="none" stroke="#1e64b4" stroke-width="2.4"/><rect x="1.2" y="8.6" width="12.6" height="10.6" fill="#dbe8f5" stroke="#1e64b4" stroke-width="2.4"/></svg>
<svg class="a" style="left:2232.0px;top:434.8px" width="36" height="22" viewBox="0 0 36 22"><path d="M14.6 4.4 A7.2 8.8 0 1 0 14.6 17.6" fill="none" stroke="#228b22" stroke-width="3"/><path d="M25.8 1.6 L24.8 15.2 M31.8 1.6 L30.8 15.2 M21.2 5.8 L35.6 5.8 M20.6 11 L35 11" stroke="#228b22" stroke-width="2.6"/></svg>
<div class="tr" style="left:2283.1px;top:422.3px;letter-spacing:-0.35px;">FlatValueEventsToAzureEventHubPipeline.cs</div>
<svg class="a" style="left:2131.3px;top:479.5px" width="15" height="26" viewBox="0 0 15 26"><path d="M1.8 2.3 L12.2 12.5 L1.8 22.7 Z" fill="none" stroke="#1e1e1e" stroke-width="2.6"/></svg>
<svg class="a" style="left:2162.8px;top:484.0px" width="15" height="21" viewBox="0 0 15 21"><path d="M3.8 9 L3.8 5.2 A3.7 3.7 0 0 1 11.2 5.2 L11.2 9" fill="none" stroke="#1e64b4" stroke-width="2.4"/><rect x="1.2" y="8.6" width="12.6" height="10.6" fill="#dbe8f5" stroke="#1e64b4" stroke-width="2.4"/></svg>
<svg class="a" style="left:2187.3px;top:478.5px" width="35" height="30" viewBox="0 0 35 30"><rect x="1.5" y="1.5" width="31" height="26.5" fill="#e3e3e3" stroke="#686868" stroke-width="2.6"/><path d="M14.5 9.5 A5.5 6.3 0 1 0 14.5 19.5" fill="none" stroke="#2b8a2b" stroke-width="2.4"/><path d="M20.5 7.5 L19.5 21 M26 7.5 L25 21 M17 11.5 L29 11.5 M16.5 17 L28.5 17" stroke="#2b8a2b" stroke-width="2.4"/></svg>
<div class="tr" style="left:2237.9px;top:470.3px;letter-spacing:-0.35px;">FeatBit.DataExport.Pipelines.Segment</div>
<svg class="a" style="left:2086.3px;top:532.6px" width="18" height="17" viewBox="0 0 18 17"><path d="M0 16 L16.6 16 L16.6 0.5 Z" fill="#1e1e1e"/></svg>
<svg class="a" style="left:2117.6px;top:532.0px" width="15" height="21" viewBox="0 0 15 21"><path d="M3.8 9 L3.8 5.2 A3.7 3.7 0 0 1 11.2 5.2 L11.2 9" fill="none" stroke="#1e64b4" stroke-width="2.4"/><rect x="1.2" y="8.6" width="12.6" height="10.6" fill="#dbe8f5" stroke="#1e64b4" stroke-width="2.4"/></svg>
<svg class="a" style="left:2142.1px;top:526.5px" width="35" height="30" viewBox="0 0 35 30"><rect x="1.5" y="1.5" width="31" height="26.5" fill="#e3e3e3" stroke="#686868" stroke-width="2.6"/><path d="M14.5 9.5 A5.5 6.3 0 1 0 14.5 19.5" fill="none" stroke="#2b8a2b" stroke-width="2.4"/><path d="M20.5 7.5 L19.5 21 M26 7.5 L25 21 M17 11.5 L29 11.5 M16.5 17 L28.5 17" stroke="#2b8a2b" stroke-width="2.4"/></svg>
<div class="tr" style="left:2192.7px;top:518.3px;letter-spacing:-0.27px;font-weight:bold">FeatBit.DataExport</div>
<svg class="a" style="left:2131.3px;top:575.5px" width="15" height="26" viewBox="0 0 15 26"><path d="M1.8 2.3 L12.2 12.5 L1.8 22.7 Z" fill="none" stroke="#1e1e1e" stroke-width="2.6"/></svg>
<svg class="a" style="left:2183.8px;top:574.8px" width="42" height="28" viewBox="0 0 42 28"><path d="M14 6 L26 6" stroke="#555" stroke-width="2.2"/><rect x="6.5" y="2" width="8" height="7.5" fill="#e0e0e0" stroke="#555" stroke-width="2.2"/><rect x="26.5" y="0.8" width="13" height="13" fill="#e0e0e0" stroke="#555" stroke-width="2.4"/><path d="M9 17.5 L21 17.5" stroke="#1e1e1e" stroke-width="2.4"/><rect x="1.3" y="13" width="9" height="8.5" fill="#e0e0e0" stroke="#1e1e1e" stroke-width="2.6"/><rect x="21.5" y="11.5" width="13.5" height="13.5" fill="#e0e0e0" stroke="#1e1e1e" stroke-width="2.8"/></svg>
<div class="tr" style="left:2237.9px;top:566.3px;letter-spacing:-0.35px;">Dependencies</div>
<svg class="a" style="left:2131.3px;top:623.5px" width="15" height="26" viewBox="0 0 15 26"><path d="M1.8 2.3 L12.2 12.5 L1.8 22.7 Z" fill="none" stroke="#1e1e1e" stroke-width="2.6"/></svg>
<svg class="a" style="left:2162.8px;top:628.0px" width="15" height="21" viewBox="0 0 15 21"><path d="M3.8 9 L3.8 5.2 A3.7 3.7 0 0 1 11.2 5.2 L11.2 9" fill="none" stroke="#1e64b4" stroke-width="2.4"/><rect x="1.2" y="8.6" width="12.6" height="10.6" fill="#dbe8f5" stroke="#1e64b4" stroke-width="2.4"/></svg>
<svg class="a" style="left:2184.0px;top:622.8px" width="40" height="38" viewBox="0 0 40 38"><path d="M4 27 L4 2 L17 2 L18.5 4.5 L36 4.5 L36 27 Z" fill="#cbb174" stroke="#9c7d22" stroke-width="2.6" stroke-linejoin="round"/><path d="M4.5 7.5 L17.5 7.5" stroke="#9c7d22" stroke-width="2.4"/><path d="M10 21 L21 32" stroke="#1e1e1e" stroke-width="4.5" stroke-linecap="round"/><path d="M12 23 A7 7 0 1 1 3 14 L6.5 18 L9.5 17.5 L10 14.5 L6.5 11 A7 7 0 0 1 12 23 Z" fill="#1e1e1e"/></svg>
<div class="tr" style="left:2237.9px;top:614.3px;letter-spacing:-0.35px;">Properties</div>
<svg class="a" style="left:2131.3px;top:671.5px" width="15" height="26" viewBox="0 0 15 26"><path d="M1.8 2.3 L12.2 12.5 L1.8 22.7 Z" fill="none" stroke="#1e1e1e" stroke-width="2.6"/></svg>
<svg class="a" style="left:2162.8px;top:680.3px" width="18" height="14" viewBox="0 0 18 14"><path d="M1.5 7 L6.5 12 L16.5 2" fill="none" stroke="#a5182f" stroke-width="2.8"/></svg>
<svg class="a" style="left:2186.8px;top:674.8px" width="36" height="22" viewBox="0 0 36 22"><path d="M14.6 4.4 A7.2 8.8 0 1 0 14.6 17.6" fill="none" stroke="#228b22" stroke-width="3"/><path d="M25.8 1.6 L24.8 15.2 M31.8 1.6 L30.8 15.2 M21.2 5.8 L35.6 5.8 M20.6 11 L35 11" stroke="#228b22" stroke-width="2.6"/></svg>
<div class="tr" style="left:2237.9px;top:662.3px;letter-spacing:-0.35px;">Program.cs</div>
<svg class="a" style="left:2131.3px;top:719.5px" width="15" height="26" viewBox="0 0 15 26"><path d="M1.8 2.3 L12.2 12.5 L1.8 22.7 Z" fill="none" stroke="#1e1e1e" stroke-width="2.6"/></svg>
<svg class="a" style="left:2162.8px;top:724.0px" width="15" height="21" viewBox="0 0 15 21"><path d="M3.8 9 L3.8 5.2 A3.7 3.7 0 0 1 11.2 5.2 L11.2 9" fill="none" stroke="#1e64b4" stroke-width="2.4"/><rect x="1.2" y="8.6" width="12.6" height="10.6" fill="#dbe8f5" stroke="#1e64b4" stroke-width="2.4"/></svg>
<svg class="a" style="left:2186.8px;top:722.8px" width="36" height="22" viewBox="0 0 36 22"><path d="M14.6 4.4 A7.2 8.8 0 1 0 14.6 17.6" fill="none" stroke="#228b22" stroke-width="3"/><path d="M25.8 1.6 L24.8 15.2 M31.8 1.6 L30.8 15.2 M21.2 5.8 L35.6 5.8 M20.6 11 L35 11" stroke="#228b22" stroke-width="2.6"/></svg>
<div class="tr" style="left:2237.9px;top:710.3px;letter-spacing:-0.35px;">Util.cs</div>
<svg class="a" style="left:2086.1px;top:767.5px" width="15" height="26" viewBox="0 0 15 26"><path d="M1.8 2.3 L12.2 12.5 L1.8 22.7 Z" fill="none" stroke="#1e1e1e" stroke-width="2.6"/></svg>
<svg class="a" style="left:2117.6px;top:772.0px" width="15" height="21" viewBox="0 0 15 21"><path d="M3.8 9 L3.8 5.2 A3.7 3.7 0 0 1 11.2 5.2 L11.2 9" fill="none" stroke="#1e64b4" stroke-width="2.4"/><rect x="1.2" y="8.6" width="12.6" height="10.6" fill="#dbe8f5" stroke="#1e64b4" stroke-width="2.4"/></svg>
<svg class="a" style="left:2142.1px;top:766.5px" width="35" height="30" viewBox="0 0 35 30"><rect x="1.5" y="1.5" width="31" height="26.5" fill="#e3e3e3" stroke="#686868" stroke-width="2.6"/><path d="M14.5 9.5 A5.5 6.3 0 1 0 14.5 19.5" fill="none" stroke="#2b8a2b" stroke-width="2.4"/><path d="M20.5 7.5 L19.5 21 M26 7.5 L25 21 M17 11.5 L29 11.5 M16.5 17 L28.5 17" stroke="#2b8a2b" stroke-width="2.4"/></svg>
<div class="tr" style="left:2192.7px;top:758.3px;letter-spacing:-0.35px;">FeatBit.DataExport.ClickHouse</div>
<svg class="a" style="left:2086.3px;top:820.6px" width="18" height="17" viewBox="0 0 18 17"><path d="M0 16 L16.6 16 L16.6 0.5 Z" fill="#1e1e1e"/></svg>
<svg class="a" style="left:2117.6px;top:820.0px" width="15" height="21" viewBox="0 0 15 21"><path d="M3.8 9 L3.8 5.2 A3.7 3.7 0 0 1 11.2 5.2 L11.2 9" fill="none" stroke="#1e64b4" stroke-width="2.4"/><rect x="1.2" y="8.6" width="12.6" height="10.6" fill="#dbe8f5" stroke="#1e64b4" stroke-width="2.4"/></svg>
<svg class="a" style="left:2142.1px;top:814.5px" width="35" height="30" viewBox="0 0 35 30"><rect x="1.5" y="1.5" width="31" height="26.5" fill="#e3e3e3" stroke="#686868" stroke-width="2.6"/><path d="M14.5 9.5 A5.5 6.3 0 1 0 14.5 19.5" fill="none" stroke="#2b8a2b" stroke-width="2.4"/><path d="M20.5 7.5 L19.5 21 M26 7.5 L25 21 M17 11.5 L29 11.5 M16.5 17 L28.5 17" stroke="#2b8a2b" stroke-width="2.4"/></svg>
<div class="tr" style="left:2192.7px;top:806.3px;letter-spacing:-0.15px;">FeatBit.DataExport.Destination.AzureEventHub</div>
<svg class="a" style="left:2131.3px;top:863.5px" width="15" height="26" viewBox="0 0 15 26"><path d="M1.8 2.3 L12.2 12.5 L1.8 22.7 Z" fill="none" stroke="#1e1e1e" stroke-width="2.6"/></svg>
<svg class="a" style="left:2183.8px;top:862.8px" width="42" height="28" viewBox="0 0 42 28"><path d="M14 6 L26 6" stroke="#555" stroke-width="2.2"/><rect x="6.5" y="2" width="8" height="7.5" fill="#e0e0e0" stroke="#555" stroke-width="2.2"/><rect x="26.5" y="0.8" width="13" height="13" fill="#e0e0e0" stroke="#555" stroke-width="2.4"/><path d="M9 17.5 L21 17.5" stroke="#1e1e1e" stroke-width="2.4"/><rect x="1.3" y="13" width="9" height="8.5" fill="#e0e0e0" stroke="#1e1e1e" stroke-width="2.6"/><rect x="21.5" y="11.5" width="13.5" height="13.5" fill="#e0e0e0" stroke="#1e1e1e" stroke-width="2.8"/></svg>
<div class="tr" style="left:2237.9px;top:854.3px;letter-spacing:-0.35px;">Dependencies</div>
<svg class="a" style="left:2131.3px;top:911.5px" width="15" height="26" viewBox="0 0 15 26"><path d="M1.8 2.3 L12.2 12.5 L1.8 22.7 Z" fill="none" stroke="#1e1e1e" stroke-width="2.6"/></svg>
<svg class="a" style="left:2162.8px;top:916.0px" width="15" height="21" viewBox="0 0 15 21"><path d="M3.8 9 L3.8 5.2 A3.7 3.7 0 0 1 11.2 5.2 L11.2 9" fill="none" stroke="#1e64b4" stroke-width="2.4"/><rect x="1.2" y="8.6" width="12.6" height="10.6" fill="#dbe8f5" stroke="#1e64b4" stroke-width="2.4"/></svg>
<svg class="a" style="left:2186.8px;top:914.8px" width="36" height="22" viewBox="0 0 36 22"><path d="M14.6 4.4 A7.2 8.8 0 1 0 14.6 17.6" fill="none" stroke="#228b22" stroke-width="3"/><path d="M25.8 1.6 L24.8 15.2 M31.8 1.6 L30.8 15.2 M21.2 5.8 L35.6 5.8 M20.6 11 L35 11" stroke="#228b22" stroke-width="2.6"/></svg>
<div class="tr" style="left:2237.9px;top:902.3px;letter-spacing:-0.05px;">AzureEventHubWriter.cs</div>
<svg class="a" style="left:2131.3px;top:959.5px" width="15" height="26" viewBox="0 0 15 26"><path d="M1.8 2.3 L12.2 12.5 L1.8 22.7 Z" fill="none" stroke="#1e1e1e" stroke-width="2.6"/></svg>
<svg class="a" style="left:2162.8px;top:964.0px" width="15" height="21" viewBox="0 0 15 21"><path d="M3.8 9 L3.8 5.2 A3.7 3.7 0 0 1 11.2 5.2 L11.2 9" fill="none" stroke="#1e64b4" stroke-width="2.4"/><rect x="1.2" y="8.6" width="12.6" height="10.6" fill="#dbe8f5" stroke="#1e64b4" stroke-width="2.4"/></svg>
<svg class="a" style="left:2186.8px;top:962.8px" width="36" height="22" viewBox="0 0 36 22"><path d="M14.6 4.4 A7.2 8.8 0 1 0 14.6 17.6" fill="none" stroke="#228b22" stroke-width="3"/><path d="M25.8 1.6 L24.8 15.2 M31.8 1.6 L30.8 15.2 M21.2 5.8 L35.6 5.8 M20.6 11 L35 11" stroke="#228b22" stroke-width="2.6"/></svg>
<div class="tr" style="left:2237.9px;top:950.3px;letter-spacing:-0.35px;">CustomEventReaderTester.cs</div>
<svg class="a" style="left:2131.3px;top:1007.5px" width="15" height="26" viewBox="0 0 15 26"><path d="M1.8 2.3 L12.2 12.5 L1.8 22.7 Z" fill="none" stroke="#1e1e1e" stroke-width="2.6"/></svg>
<svg class="a" style="left:2162.8px;top:1012.0px" width="15" height="21" viewBox="0 0 15 21"><path d="M3.8 9 L3.8 5.2 A3.7 3.7 0 0 1 11.2 5.2 L11.2 9" fill="none" stroke="#1e64b4" stroke-width="2.4"/><rect x="1.2" y="8.6" width="12.6" height="10.6" fill="#dbe8f5" stroke="#1e64b4" stroke-width="2.4"/></svg>
<svg class="a" style="left:2186.8px;top:1010.8px" width="36" height="22" viewBox="0 0 36 22"><path d="M14.6 4.4 A7.2 8.8 0 1 0 14.6 17.6" fill="none" stroke="#228b22" stroke-width="3"/><path d="M25.8 1.6 L24.8 15.2 M31.8 1.6 L30.8 15.2 M21.2 5.8 L35.6 5.8 M20.6 11 L35 11" stroke="#228b22" stroke-width="2.6"/></svg>
<div class="tr" style="left:2237.9px;top:998.3px;letter-spacing:-0.35px;">FlagValueEventReaderTester.cs</div>
<svg class="a" style="left:2086.3px;top:1060.6px" width="18" height="17" viewBox="0 0 18 17"><path d="M0 16 L16.6 16 L16.6 0.5 Z" fill="#1e1e1e"/></svg>
<svg class="a" style="left:2117.6px;top:1060.0px" width="15" height="21" viewBox="0 0 15 21"><path d="M3.8 9 L3.8 5.2 A3.7 3.7 0 0 1 11.2 5.2 L11.2 9" fill="none" stroke="#1e64b4" stroke-width="2.4"/><rect x="1.2" y="8.6" width="12.6" height="10.6" fill="#dbe8f5" stroke="#1e64b4" stroke-width="2.4"/></svg>
<svg class="a" style="left:2142.1px;top:1054.5px" width="35" height="30" viewBox="0 0 35 30"><rect x="1.5" y="1.5" width="31" height="26.5" fill="#e3e3e3" stroke="#686868" stroke-width="2.6"/><path d="M14.5 9.5 A5.5 6.3 0 1 0 14.5 19.5" fill="none" stroke="#2b8a2b" stroke-width="2.4"/><path d="M20.5 7.5 L19.5 21 M26 7.5 L25 21 M17 11.5 L29 11.5 M16.5 17 L28.5 17" stroke="#2b8a2b" stroke-width="2.4"/></svg>
<div class="tr" style="left:2192.7px;top:1046.3px;letter-spacing:-0.15px;">FeatBit.DataExport.Destination.Segment</div>
<svg class="a" style="left:2131.3px;top:1103.5px" width="15" height="26" viewBox="0 0 15 26"><path d="M1.8 2.3 L12.2 12.5 L1.8 22.7 Z" fill="none" stroke="#1e1e1e" stroke-width="2.6"/></svg>
<svg class="a" style="left:2183.8px;top:1102.8px" width="42" height="28" viewBox="0 0 42 28"><path d="M14 6 L26 6" stroke="#555" stroke-width="2.2"/><rect x="6.5" y="2" width="8" height="7.5" fill="#e0e0e0" stroke="#555" stroke-width="2.2"/><rect x="26.5" y="0.8" width="13" height="13" fill="#e0e0e0" stroke="#555" stroke-width="2.4"/><path d="M9 17.5 L21 17.5" stroke="#1e1e1e" stroke-width="2.4"/><rect x="1.3" y="13" width="9" height="8.5" fill="#e0e0e0" stroke="#1e1e1e" stroke-width="2.6"/><rect x="21.5" y="11.5" width="13.5" height="13.5" fill="#e0e0e0" stroke="#1e1e1e" stroke-width="2.8"/></svg>
<div class="tr" style="left:2237.9px;top:1094.3px;letter-spacing:-0.35px;">Dependencies</div>
<svg class="a" style="left:2131.3px;top:1151.5px" width="15" height="26" viewBox="0 0 15 26"><path d="M1.8 2.3 L12.2 12.5 L1.8 22.7 Z" fill="none" stroke="#1e1e1e" stroke-width="2.6"/></svg>
<svg class="a" style="left:2162.8px;top:1156.0px" width="15" height="21" viewBox="0 0 15 21"><path d="M3.8 9 L3.8 5.2 A3.7 3.7 0 0 1 11.2 5.2 L11.2 9" fill="none" stroke="#1e64b4" stroke-width="2.4"/><rect x="1.2" y="8.6" width="12.6" height="10.6" fill="#dbe8f5" stroke="#1e64b4" stroke-width="2.4"/></svg>
<svg class="a" style="left:2186.8px;top:1154.8px" width="36" height="22" viewBox="0 0 36 22"><path d="M14.6 4.4 A7.2 8.8 0 1 0 14.6 17.6" fill="none" stroke="#228b22" stroke-width="3"/><path d="M25.8 1.6 L24.8 15.2 M31.8 1.6 L30.8 15.2 M21.2 5.8 L35.6 5.8 M20.6 11 L35 11" stroke="#228b22" stroke-width="2.6"/></svg>
<div class="tr" style="left:2237.9px;top:1142.3px;letter-spacing:-0.35px;">CustomEventTrackModel.cs</div>
<svg class="a" style="left:2131.3px;top:1199.5px" width="15" height="26" viewBox="0 0 15 26"><path d="M1.8 2.3 L12.2 12.5 L1.8 22.7 Z" fill="none" stroke="#1e1e1e" stroke-width="2.6"/></svg>
<svg class="a" style="left:2162.8px;top:1204.0px" width="15" height="21" viewBox="0 0 15 21"><path d="M3.8 9 L3.8 5.2 A3.7 3.7 0 0 1 11.2 5.2 L11.2 9" fill="none" stroke="#1e64b4" stroke-width="2.4"/><rect x="1.2" y="8.6" width="12.6" height="10.6" fill="#dbe8f5" stroke="#1e64b4" stroke-width="2.4"/></svg>
<svg class="a" style="left:2186.8px;top:1202.8px" width="36" height="22" viewBox="0 0 36 22"><path d="M14.6 4.4 A7.2 8.8 0 1 0 14.6 17.6" fill="none" stroke="#228b22" stroke-width="3"/><path d="M25.8 1.6 L24.8 15.2 M31.8 1.6 L30.8 15.2 M21.2 5.8 L35.6 5.8 M20.6 11 L35 11" stroke="#228b22" stroke-width="2.6"/></svg>
<div class="tr" style="left:2237.9px;top:1190.3px;letter-spacing:-0.35px;">FlagValueTrackModel.cs</div>
<svg class="a" style="left:2131.3px;top:1247.5px" width="15" height="26" viewBox="0 0 15 26"><path d="M1.8 2.3 L12.2 12.5 L1.8 22.7 Z" fill="none" stroke="#1e1e1e" stroke-width="2.6"/></svg>
<svg class="a" style="left:2162.8px;top:1252.0px" width="15" height="21" viewBox="0 0 15 21"><path d="M3.8 9 L3.8 5.2 A3.7 3.7 0 0 1 11.2 5.2 L11.2 9" fill="none" stroke="#1e64b4" stroke-width="2.4"/><rect x="1.2" y="8.6" width="12.6" height="10.6" fill="#dbe8f5" stroke="#1e64b4" stroke-width="2.4"/></svg>
<svg class="a" style="left:2186.8px;top:1250.8px" width="36" height="22" viewBox="0 0 36 22"><path d="M14.6 4.4 A7.2 8.8 0 1 0 14.6 17.6" fill="none" stroke="#228b22" stroke-width="3"/><path d="M25.8 1.6 L24.8 15.2 M31.8 1.6 L30.8 15.2 M21.2 5.8 L35.6 5.8 M20.6 11 L35 11" stroke="#228b22" stroke-width="2.6"/></svg>
<div class="tr" style="left:2237.9px;top:1238.3px;letter-spacing:-0.35px;">SegmentWriter.cs</div>
<svg class="a" style="left:2086.3px;top:1300.6px" width="18" height="17" viewBox="0 0 18 17"><path d="M0 16 L16.6 16 L16.6 0.5 Z" fill="#1e1e1e"/></svg>
<svg class="a" style="left:2117.6px;top:1300.0px" width="15" height="21" viewBox="0 0 15 21"><path d="M3.8 9 L3.8 5.2 A3.7 3.7 0 0 1 11.2 5.2 L11.2 9" fill="none" stroke="#1e64b4" stroke-width="2.4"/><rect x="1.2" y="8.6" width="12.6" height="10.6" fill="#dbe8f5" stroke="#1e64b4" stroke-width="2.4"/></svg>
<svg class="a" style="left:2142.1px;top:1294.5px" width="35" height="30" viewBox="0 0 35 30"><rect x="1.5" y="1.5" width="31" height="26.5" fill="#e3e3e3" stroke="#686868" stroke-width="2.6"/><path d="M14.5 9.5 A5.5 6.3 0 1 0 14.5 19.5" fill="none" stroke="#2b8a2b" stroke-width="2.4"/><path d="M20.5 7.5 L19.5 21 M26 7.5 L25 21 M17 11.5 L29 11.5 M16.5 17 L28.5 17" stroke="#2b8a2b" stroke-width="2.4"/></svg>
<div class="tr" style="left:2192.7px;top:1286.3px;letter-spacing:-0.35px;">FeatBit.DataExport.Models</div>
<svg class="a" style="left:2131.3px;top:1343.5px" width="15" height="26" viewBox="0 0 15 26"><path d="M1.8 2.3 L12.2 12.5 L1.8 22.7 Z" fill="none" stroke="#1e1e1e" stroke-width="2.6"/></svg>
<svg class="a" style="left:2183.8px;top:1342.8px" width="42" height="28" viewBox="0 0 42 28"><path d="M14 6 L26 6" stroke="#555" stroke-width="2.2"/><rect x="6.5" y="2" width="8" height="7.5" fill="#e0e0e0" stroke="#555" stroke-width="2.2"/><rect x="26.5" y="0.8" width="13" height="13" fill="#e0e0e0" stroke="#555" stroke-width="2.4"/><path d="M9 17.5 L21 17.5" stroke="#1e1e1e" stroke-width="2.4"/><rect x="1.3" y="13" width="9" height="8.5" fill="#e0e0e0" stroke="#1e1e1e" stroke-width="2.6"/><rect x="21.5" y="11.5" width="13.5" height="13.5" fill="#e0e0e0" stroke="#1e1e1e" stroke-width="2.8"/></svg>
<div class="tr" style="left:2237.9px;top:1334.3px;letter-spacing:-0.35px;">Dependencies</div>
<svg class="a" style="left:2131.3px;top:1391.5px" width="15" height="26" viewBox="0 0 15 26"><path d="M1.8 2.3 L12.2 12.5 L1.8 22.7 Z" fill="none" stroke="#1e1e1e" stroke-width="2.6"/></svg>
<svg class="a" style="left:2162.8px;top:1396.0px" width="15" height="21" viewBox="0 0 15 21"><path d="M3.8 9 L3.8 5.2 A3.7 3.7 0 0 1 11.2 5.2 L11.2 9" fill="none" stroke="#1e64b4" stroke-width="2.4"/><rect x="1.2" y="8.6" width="12.6" height="10.6" fill="#dbe8f5" stroke="#1e64b4" stroke-width="2.4"/></svg>
<svg class="a" style="left:2186.8px;top:1394.8px" width="36" height="22" viewBox="0 0 36 22"><path d="M14.6 4.4 A7.2 8.8 0 1 0 14.6 17.6" fill="none" stroke="#228b22" stroke-width="3"/><path d="M25.8 1.6 L24.8 15.2 M31.8 1.6 L30.8 15.2 M21.2 5.8 L35.6 5.8 M20.6 11 L35 11" stroke="#228b22" stroke-width="2.6"/></svg>
<div class="tr" style="left:2237.9px;top:1382.3px;letter-spacing:-0.35px;">CustomEvent.cs</div>
<svg class="a" style="left:2131.3px;top:1439.5px" width="15" height="26" viewBox="0 0 15 26"><path d="M1.8 2.3 L12.2 12.5 L1.8 22.7 Z" fill="none" stroke="#1e1e1e" stroke-width="2.6"/></svg>
<svg class="a" style="left:2162.8px;top:1444.0px" width="15" height="21" viewBox="0 0 15 21"><path d="M3.8 9 L3.8 5.2 A3.7 3.7 0 0 1 11.2 5.2 L11.2 9" fill="none" stroke="#1e64b4" stroke-width="2.4"/><rect x="1.2" y="8.6" width="12.6" height="10.6" fill="#dbe8f5" stroke="#1e64b4" stroke-width="2.4"/></svg>
<svg class="a" style="left:2186.8px;top:1442.8px" width="36" height="22" viewBox="0 0 36 22"><path d="M14.6 4.4 A7.2 8.8 0 1 0 14.6 17.6" fill="none" stroke="#228b22" stroke-width="3"/><path d="M25.8 1.6 L24.8 15.2 M31.8 1.6 L30.8 15.2 M21.2 5.8 L35.6 5.8 M20.6 11 L35 11" stroke="#228b22" stroke-width="2.6"/></svg>
<div class="tr" style="left:2237.9px;top:1430.3px;letter-spacing:-0.35px;">FlagValueEvent.cs</div>
<svg class="a" style="left:2131.3px;top:1487.5px" width="15" height="26" viewBox="0 0 15 26"><path d="M1.8 2.3 L12.2 12.5 L1.8 22.7 Z" fill="none" stroke="#1e1e1e" stroke-width="2.6"/></svg>
<svg class="a" style="left:2162.8px;top:1492.0px" width="15" height="21" viewBox="0 0 15 21"><path d="M3.8 9 L3.8 5.2 A3.7 3.7 0 0 1 11.2 5.2 L11.2 9" fill="none" stroke="#1e64b4" stroke-width="2.4"/><rect x="1.2" y="8.6" width="12.6" height="10.6" fill="#dbe8f5" stroke="#1e64b4" stroke-width="2.4"/></svg>
<svg class="a" style="left:2186.8px;top:1490.8px" width="36" height="22" viewBox="0 0 36 22"><path d="M14.6 4.4 A7.2 8.8 0 1 0 14.6 17.6" fill="none" stroke="#228b22" stroke-width="3"/><path d="M25.8 1.6 L24.8 15.2 M31.8 1.6 L30.8 15.2 M21.2 5.8 L35.6 5.8 M20.6 11 L35 11" stroke="#228b22" stroke-width="2.6"/></svg>
<div class="tr" style="left:2237.9px;top:1478.3px;letter-spacing:-0.35px;">ParamOptions.cs</div>
<div class="a" style="left:2329.4px;top:1552.5px;width:641px;height:30px;background:#eeeef2;border:1.6px solid #cccedb;border-bottom:none;border-right:none"></div>
<div class="a" style="left:2073px;top:1554px;height:48px;line-height:48px;font-size:32px;white-space:pre;color:#1464b4">Solution Explorer</div>
<div class="a" style="left:2345px;top:1554px;height:48px;line-height:48px;font-size:32px;white-space:pre;color:#1e1e1e">Git Changes</div>
<div class="a" style="left:2970.6px;top:0;width:26px;height:1576px;background:#eeeef2"></div>
<div class="a" style="left:3024px;top:8px;transform-origin:0 0;transform:rotate(90deg);font-size:32px;letter-spacing:4px;white-space:pre;color:#1e1e1e;line-height:40px">Git Changes</div>
<div class="a" style="left:2969px;top:0;width:1.6px;height:1576px;background:#cccedb"></div>
<div class="red" style="left:1466px;top:356.5px;letter-spacing:1.0px">Uncomment the code here</div>
<div class="red" style="left:1466px;top:426.4px;letter-spacing:0.75px">Change the storage connection</div>
<div class="red" style="left:1466px;top:495.1px;letter-spacing:1.2px">string hard coded in the</div>
<div class="red" style="left:1466px;top:565.1px">related class and function</div>
<svg class="a" style="left:0;top:0" width="2996" height="1576" viewBox="0 0 2996 1576">
<path d="M1552.5 446.6 L1553.5 447.8 L1396.7 602.4 L1412.6 608.6 L1363 619.3 L1378 571.4 L1382.5 589 Z" fill="#ee2222"/>
</svg>
</body></html>
